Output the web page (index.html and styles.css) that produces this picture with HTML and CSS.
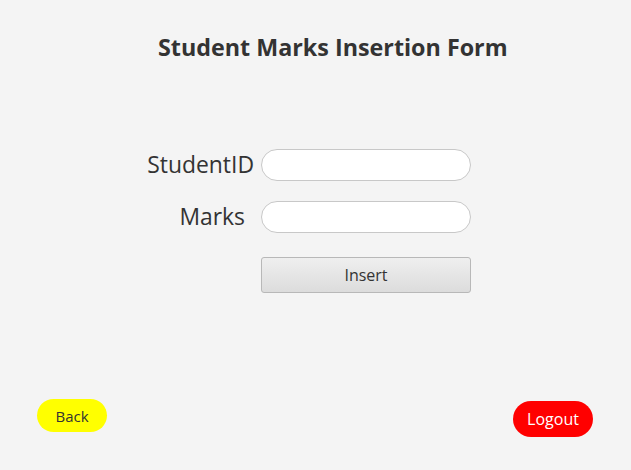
FILE: index.html
```html
<!DOCTYPE html>
<html>
<head>
<meta charset="utf-8">
<link rel="stylesheet" href="styles.css">
</head>
<body>
<div class="page">
  <h1 class="title">Student Marks Insertion Form</h1>
  <div class="form">
    <label class="label">StudentID</label>
    <input class="field" type="text">
    <label class="label label-marks">Marks</label>
    <input class="field" type="text">
    <span></span>
    <button class="insert">Insert</button>
  </div>
  <div class="footer">
    <button class="pill back">Back</button>
    <button class="pill logout">Logout</button>
  </div>
</div>
</body>
</html>
```
FILE: styles.css
```css
html, body {
  margin: 0;
  padding: 0;
  background: #f4f4f4;
}
.page {
  height: 470px;
  display: flex;
  flex-direction: column;
  font-family: "Open Sans", "Noto Sans", sans-serif;
  color: #333333;
}
.title {
  margin: 0;
  padding-top: 31px;
  padding-left: 158px;
  font-size: 23.3px;
  font-weight: 700;
  line-height: 32px;
  color: #333333;
  white-space: nowrap;
}
.form {
  margin-top: 86px;
  display: grid;
  grid-template-columns: 254px 210px;
  column-gap: 7px;
  row-gap: 20px;
  align-items: center;
}
.label {
  justify-self: end;
  font-size: 22.9px;
  line-height: 32px;
}
.label-marks {
  padding-right: 9px;
}
.field {
  box-sizing: border-box;
  width: 210px;
  height: 32px;
  margin: 0;
  border: 1px solid #c8c8c8;
  border-radius: 16px;
  background: #ffffff;
  outline: none;
  padding: 0 12px;
  font-family: inherit;
}
.insert {
  box-sizing: border-box;
  margin-top: 4px;
  width: 210px;
  height: 36px;
  border: 1px solid #b8b8b8;
  border-radius: 3px;
  background: linear-gradient(#efefef, #dcdcdc);
  font-family: inherit;
  font-size: 16px;
  color: #333333;
  padding: 0;
}
.footer {
  margin-top: auto;
  padding: 0 38px 33px 37px;
  display: flex;
  justify-content: space-between;
  align-items: flex-start;
}
.pill {
  border: none;
  border-radius: 18px;
  font-family: inherit;
  padding: 0;
}
.back {
  width: 70px;
  height: 33px;
  background: #ffff00;
  color: #333333;
  font-size: 15px;
}
.logout {
  margin-top: 2px;
  width: 80px;
  height: 36px;
  background: #ff0000;
  color: #ffffff;
  font-size: 16px;
}
```
